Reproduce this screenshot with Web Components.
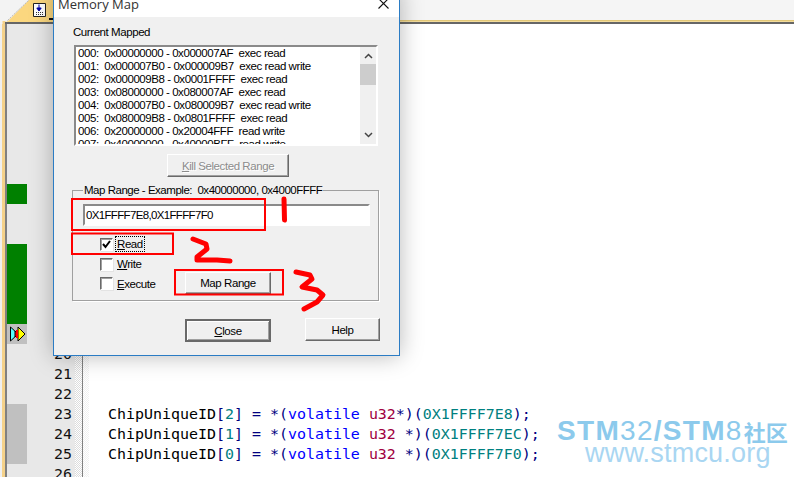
<!DOCTYPE html>
<html><head><meta charset="utf-8"><title>Memory Map</title>
<style>
html,body{margin:0;height:100%;overflow:hidden;background:#fff}
.k{color:#0000ff}.t{color:#a00040}.n{color:#008080}.p{color:#000080}
</style></head><body>
<ide-window>
  <ide-tabstrip slot="top"></ide-tabstrip>
  <code-editor>
    <code-line n="4"></code-line><code-line n="5"></code-line><code-line n="6"></code-line><code-line n="7"></code-line>
    <code-line n="8"></code-line><code-line n="9"></code-line><code-line n="10"></code-line><code-line n="11"></code-line>
    <code-line n="12" mark="green"></code-line><code-line n="13"></code-line><code-line n="14"></code-line>
    <code-line n="15" mark="green"></code-line><code-line n="16" mark="green"></code-line><code-line n="17" mark="green"></code-line><code-line n="18" mark="green"></code-line>
    <code-line n="19" mark="gray" arrow></code-line>
    <code-line n="20"></code-line><code-line n="21"></code-line><code-line n="22"></code-line>
    <code-line n="23" mark="gray">ChipUniqueID<span class="p">[</span><span class="n">2</span><span class="p">]</span> <span class="p">=</span> <span class="p">*(</span><span class="k">volatile</span> <span class="t">u32</span><span class="p">*)(</span><span class="n">0X1FFFF7E8</span><span class="p">);</span></code-line>
    <code-line n="24" mark="gray">ChipUniqueID<span class="p">[</span><span class="n">1</span><span class="p">]</span> <span class="p">=</span> <span class="p">*(</span><span class="k">volatile</span> <span class="t">u32</span> <span class="p">*)(</span><span class="n">0X1FFFF7EC</span><span class="p">);</span></code-line>
    <code-line n="25" mark="gray">ChipUniqueID<span class="p">[</span><span class="n">0</span><span class="p">]</span> <span class="p">=</span> <span class="p">*(</span><span class="k">volatile</span> <span class="t">u32</span> <span class="p">*)(</span><span class="n">0X1FFFF7F0</span><span class="p">);</span></code-line>
    <code-line n="26"></code-line>
  </code-editor>
</ide-window>
<stm-watermark></stm-watermark>
<memory-map-dialog></memory-map-dialog>
<ink-overlay></ink-overlay>
<script>
function def(name, html, init){
  customElements.define(name, class extends HTMLElement{
    constructor(){super();this.attachShadow({mode:'open'}).innerHTML=html;}
    connectedCallback(){ if(init) init.call(this,this.shadowRoot); }
  });
}
const UI='"Liberation Sans",Arial,sans-serif';

def('ide-window',`<style>
:host{display:flex;flex-direction:column;height:100vh;overflow:hidden;background:#fff}
</style><slot name="top"></slot><slot></slot>`);

def('ide-tabstrip',`<style>
:host{display:flex;height:24px;flex:none;background:linear-gradient(#f5f5f5 0 20px,#e3c878 20px 21px,#f3dc9c 21px 22px,#666 22px 24px)}
svg{display:block;flex:none}
</style><svg width="60" height="24" viewBox="0 0 60 24">
<rect width="60" height="24" fill="#f4f4f4"/>
<path d="M0 0H29L8 21H0Z" fill="#f3f3f3"/>
<path d="M29 0H60V22H6V22L8 21Z" fill="#fbd77f"/>
<path d="M28.5 .5L7.500 20.500" stroke="#bbb" stroke-dasharray="2 1" fill="none"/>
<rect x="2.500" y="21" width="3" height="3" fill="#f5d28a"/>
<rect x="5" y="22" width="55" height="2" fill="#666"/>
<path d="M33.500 3.500H45.500V16.500H33.500Z" fill="#fff" stroke="#222"/>
<path d="M39 4.500V9M36.800 8L39 11L41.200 8Z" fill="#0000a8" stroke="#0000a8"/>
<path d="M36 12.500h7M36 14.500h7" stroke="#333" stroke-dasharray="1 1"/>
<rect x="49" y="18" width="5" height="2" fill="#111"/>
</svg>`);

def('code-editor',`<style>
:host{display:flex;flex:1;min-height:0}
.strip{width:7px;flex:none;background:linear-gradient(90deg,#f0f0f0 0 2.500px,#f5d28a 2.500px 5px,#808080 5px 7px)}
.lines{flex:1;display:flex;flex-direction:column}
</style><div class="strip"></div><div class="lines"><slot></slot></div>`);

def('code-line',`<style>
:host{display:flex;height:20px;flex:none;font:14.95px/20px "DejaVu Sans Mono",monospace;color:#000;white-space:pre}
.mark{width:20px;flex:none;background:#e8e8e8;display:flex;align-items:center;justify-content:center}
.num{width:45px;flex:none;background:#e8e8e8;text-align:right;color:#111}
.pad{width:3px;flex:none;background:#e8e8e8}
.fold{width:7px;flex:none;background:repeating-conic-gradient(#dcdcdc 0 25%,#fff 0 50%) 0 0/2px 2px}
.rule{width:1px;flex:none;background:#808080}
.fold2{width:6px;flex:none;background:repeating-conic-gradient(#f0f0f0 0 25%,#fff 0 50%) 0 0/2px 2px}
.code{padding-left:19px;flex:1}
svg{display:block}
</style><div class="mark"></div><div class="num"></div><div class="pad"></div><div class="fold"></div><div class="rule"></div><div class="fold2"></div><div class="code"><slot></slot></div>`,
function(r){
  r.querySelector('.num').textContent=this.getAttribute('n');
  const m=r.querySelector('.mark'),c=this.getAttribute('mark');
  if(c) m.style.background=c==='green'?'#008000':'#c0c0c0';
  if(this.hasAttribute('arrow')) m.innerHTML='<svg width="17" height="16" viewBox="0 0 17 16"><path d="M1.500 1L9 8L1.500 15Z" fill="#5ff" stroke="#000"/><path d="M6 5L9 8L6 11Z" fill="#f00" stroke="#000"/><path d="M9 1L16 8L9 15Z" fill="#ff0" stroke="#000"/><path d="M8 4V12" stroke="#f00" stroke-width="2"/></svg>';
});

def('stm-watermark',`<style>
:host{position:absolute;left:557px;top:419px;width:236px;font-family:${UI};color:#8ccaec;white-space:nowrap;pointer-events:none}
.a{font-size:28px;line-height:24px;height:24px;letter-spacing:1.300px;display:flex;align-items:center}
b{font-weight:700}
.cjk{font:700 22px/24px "Noto Sans CJK SC",sans-serif;letter-spacing:0;margin-left:1px}
.b{font-size:27px;line-height:20px;margin:0 0 0 28px;color:#a9d6f2;letter-spacing:.2px}
</style><div class="a"><b>STM</b>32<b>/STM</b>8<span class="cjk">社区</span></div><div class="b">www.stmcu.org</div>`);

def('win-button',`<style>
:host{display:flex;align-items:center;justify-content:center;box-sizing:border-box;height:23px;background:#f0f0f0;font:11.500px/14px ${UI};color:#000;
 border:1px solid;border-color:#fff #696969 #696969 #fff;box-shadow:inset -1px -1px #a0a0a0;white-space:nowrap}
:host([default]){border:2px solid #696969;box-shadow:inset 1px 1px #fff,inset -1px -1px #a0a0a0}
:host([disabled]){color:#8c8c8c;text-shadow:1px 1px #fff}
</style><slot></slot>`);

def('win-check',`<style>
:host{display:flex;align-items:center;height:100%;font:11.500px/14px ${UI};color:#000}
.box{width:13px;height:13px;box-sizing:border-box;margin-left:17px;margin-right:3px;background:#fff;border:1px solid;border-color:#696969 #fff #fff #696969;box-shadow:inset 1px 1px #a0a0a0,1px 1px #e3e3e3;flex:none;position:relative}
svg{display:none;position:absolute;left:1px;top:1px}
:host([checked]) svg{display:block}
:host([focused]) .t{outline:1px dotted #000;outline-offset:0}
.t{padding:0 1px}
</style><div class="box"><svg width="9" height="9" viewBox="0 0 9 9"><path d="M1 4L3.500 7L8 1" fill="none" stroke="#000" stroke-width="2"/></svg></div><span class="t"><slot></slot></span>`);

def('range-list',`<style>
:host{display:flex;box-sizing:border-box;width:304px;height:101px;border:2px solid;border-color:#8a8a8a #fff #fff #8a8a8a;background:#fff}
.rows{flex:1;overflow:hidden;padding-left:2px;font:11.500px/13px ${UI};color:#000;white-space:pre;min-width:0}
.bar{width:16px;flex:none;background:#f0f0f0;position:relative;display:flex;flex-direction:column;align-items:center;justify-content:space-between;padding:6px 0}
.thumb{position:absolute;left:0;right:0;top:17px;height:21px;background:#cdcdcd}
svg{display:block}
</style><div class="rows"><slot></slot></div><div class="bar"><svg width="9" height="6" viewBox="0 0 9 6"><path d="M1 5L4.500 1.500L8 5" fill="none" stroke="#444" stroke-width="1.500"/></svg><div class="thumb"></div><svg width="9" height="6" viewBox="0 0 9 6"><path d="M1 1L4.500 4.500L8 1" fill="none" stroke="#444" stroke-width="1.500"/></svg></div>`);

def('memory-map-dialog',`<style>
:host{position:absolute;left:53px;top:-13px;width:347px;height:369px;box-sizing:border-box;border:1px solid #2b7cc4;background:#f0f0f0;display:flex;flex-direction:column;font:11.500px/14px ${UI};letter-spacing:-.43px;color:#000;box-shadow:0 0 22px rgba(0,0,0,.28)}
.title{height:29px;flex:none;background:#fff;display:flex;align-items:flex-start;justify-content:space-between;padding:7px 10px 0 4px;box-sizing:border-box;font:13px/18px "Open Sans","Noto Sans",sans-serif;letter-spacing:0;color:#333}
.title svg{margin-top:3px}
.body{flex:1;padding:8px 0 0 20px;display:flex;flex-direction:column;align-items:flex-start}
.cap{margin-left:-1px}
range-list{margin-top:6px}
.kill{margin:8px 0 0 93px;width:122px}
fieldset{margin:6px 0 0 -2px;padding:7px 8px 0 10px;width:307px;height:118px;box-sizing:border-box;border:1px solid #a0a0a0;box-shadow:1px 1px #fff;min-width:0}
legend{padding:0 1px;line-height:14px;white-space:pre;letter-spacing:-.48px}
.edit{box-sizing:border-box;width:287px;height:22px;border:2px solid;border-color:#8a8a8a #fff #fff #8a8a8a;background:#fff;font:11.500px/18px ${UI};letter-spacing:-.66px;padding-left:1px;white-space:pre}
.opts{display:grid;grid-template-columns:102px 86px;grid-template-rows:20px 20px 19px;margin-top:8px}
.map{grid-column:2;grid-row:2/4;align-self:end;height:22px;margin-bottom:-1px}
.foot{display:flex;align-items:flex-start;margin:17px 0 0 111px}
.close{width:86px;margin-top:1px}
.help{width:75px;margin-left:34px}
</style>
<div class="title"><span>Memory Map</span><svg width="11" height="11" viewBox="0 0 11 11"><path d="M.5 .5L10.500 10.500M10.500 .5L.5 10.500" stroke="#111" stroke-width="1.100"/></svg></div>
<div class="body">
<div class="cap">Current Mapped</div>
<range-list>000:  0x00000000 - 0x000007AF  exec read
001:  0x000007B0 - 0x000009B7  exec read write
002:  0x000009B8 - 0x0001FFFF  exec read
003:  0x08000000 - 0x080007AF  exec read
004:  0x080007B0 - 0x080009B7  exec read write
005:  0x080009B8 - 0x0801FFFF  exec read
006:  0x20000000 - 0x20004FFF  read write
007:  0x40000000 - 0x40000BFF  read write</range-list>
<win-button class="kill" disabled><span><u>K</u>ill Selected Range</span></win-button>
<fieldset><legend>Map Range - Example:  0x40000000, 0x4000FFFF</legend>
<div class="edit">0X1FFFF7E8,0X1FFFF7F0</div>
<div class="opts">
<win-check checked focused style="grid-row:1;grid-column:1"><span><u>R</u>ead</span></win-check>
<win-check style="grid-row:2;grid-column:1"><span><u>W</u>rite</span></win-check>
<win-check style="grid-row:3;grid-column:1"><span><u>E</u>xecute</span></win-check>
<win-button class="map">Map Range</win-button>
</div></fieldset>
<div class="foot"><win-button class="close" default><span><u>C</u>lose</span></win-button><win-button class="help">Help</win-button></div>
</div>`);

def('ink-overlay',`<style>
:host{position:absolute;left:0;top:0;width:794px;height:477px;pointer-events:none}
svg{display:block}
</style><svg width="794" height="477" viewBox="0 0 794 477" fill="none" stroke="#f00">
<rect x="72" y="199" width="193" height="31" stroke-width="2"/>
<rect x="72" y="233.500" width="101" height="20.500" stroke-width="2"/>
<rect x="175" y="270" width="108" height="24.500" stroke-width="2"/>
<g stroke-width="5" stroke-linecap="round" stroke-linejoin="round">
<path d="M284 199L284.500 220"/>
<path d="M193 239L206 244L207 249L197 257L197 260L217 260L230 261"/>
<path d="M296 272L310 275L312 279L302 287L317 290L323 295L317 302L304 309"/>
</g></svg>`);
</script>
</body></html>
